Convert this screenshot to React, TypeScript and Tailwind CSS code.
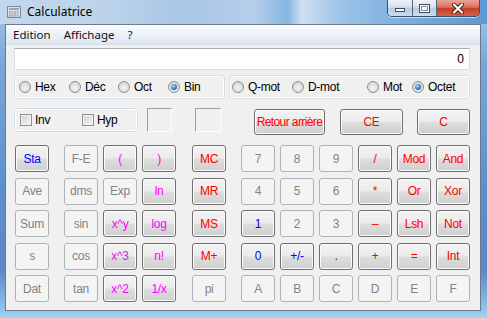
import React from "react";

type Tone = "blue" | "red" | "pink" | "gray";

const toneText: Record<Tone, string> = {
  blue: "text-[#0000ff]",
  red: "text-[#ff0000]",
  pink: "text-[#ff00ff]",
  gray: "text-[#838383]",
};

type KeyDef = { label: string; tone: Tone; off?: boolean };

const on = (label: string, tone: Tone): KeyDef => ({ label, tone });
const off = (label: string): KeyDef => ({ label, tone: "gray", off: true });

const Key: React.FC<{ k: KeyDef; className?: string }> = ({ k, className }) => (
  <div
    className={
      "flex items-center justify-center rounded-[3px] border text-[12px] tracking-[-0.3px] " +
      (k.off
        ? "border-[#adb2b5] bg-[#f4f4f4] "
        : "border-[#707070] bg-[linear-gradient(180deg,#f3f3f3_0%,#ebebeb_48%,#dddddd_52%,#cfcfcf_100%)] shadow-[inset_0_0_0_1px_#fbfbfb] ") +
      toneText[k.tone] +
      " " +
      (className ?? "h-[27px] w-[34px]")
    }
  >
    {k.label}
  </div>
);

const Block: React.FC<{ cols: string; keys: KeyDef[] }> = ({ cols, keys }) => (
  <div className={"grid gap-x-[5px] gap-y-[5.5px] " + cols}>
    {keys.map((k, i) => (
      <Key key={i} k={k} />
    ))}
  </div>
);

const Radio: React.FC<{ label: string; checked?: boolean; className?: string }> = ({
  label,
  checked,
  className,
}) => (
  <div className={"flex items-center gap-[4px] " + (className ?? "")}>
    <span className="flex h-[12px] w-[12px] shrink-0 items-center justify-center rounded-full border border-[#8e8f8f] bg-[radial-gradient(circle_at_50%_60%,#f4f4f4_0%,#dcdcdc_60%,#c8cacd_100%)]">
      {checked && (
        <span className="h-[6px] w-[6px] rounded-full bg-[radial-gradient(circle_at_40%_35%,#a6dcfb_0%,#2f7fc6_55%,#123e74_100%)]" />
      )}
    </span>
    <span className="text-[12px] tracking-[-0.3px] text-black">{label}</span>
  </div>
);

const Check: React.FC<{ label: string; className?: string }> = ({ label, className }) => (
  <div className={"flex items-center gap-[3px] " + (className ?? "")}>
    <span className="h-[12px] w-[12px] shrink-0 border border-[#8e8f8f] bg-[linear-gradient(135deg,#cfd1d4,#f6f6f6)] shadow-[inset_0_0_0_1px_#f4f4f4]" />
    <span className="text-[12px] tracking-[-0.3px] text-black">{label}</span>
  </div>
);

const groupBox =
  "rounded-[3px] border border-[#d5dfe5] shadow-[inset_0_0_0_1px_#ffffff]";

const sunken =
  "h-[24px] border border-t-[#a0a0a0] border-l-[#a0a0a0] border-r-[#fdfdfd] border-b-[#fdfdfd]";

const CalcIcon = () => (
  <svg width="14" height="12" viewBox="0 0 14 12">
    <rect x="0.5" y="0.5" width="13" height="11" fill="#dfe3e8" stroke="#7d8896" />
    <rect x="2" y="2" width="10" height="2" fill="#9aa6b4" />
    {[0, 1, 2, 3].map((c) =>
      [0, 1, 2].map((r) => (
        <rect key={c + "-" + r} x={2 + c * 2.6} y={5.3 + r * 2} width="1.6" height="1.2" fill="#7f8d9d" />
      ))
    )}
  </svg>
);

export default function App() {
  return (
    <div className="flex h-[318px] w-[487px] flex-col overflow-hidden bg-[linear-gradient(180deg,#a9c8e6_0%,#78a7d8_20%,#5c8fcb_60%,#5f86c6_85%,#8cc3ea_97%,#a8d4f2_100%)] font-['Liberation_Sans',Arial,sans-serif]">
      {/* title bar */}
      <div className="flex h-[24px] shrink-0 bg-[linear-gradient(90deg,#c3d7ec_0%,#bcd3ea_22%,#a8c6e6_38%,#b6cfea_52%,#86b6e1_59%,#cfe1f2_62%,#9cc3e8_70%,#79acdc_84%,#5c98d2_100%)]">
        <div className="ml-[7px] flex items-center">
          <CalcIcon />
          <span className="ml-[6px] font-['Noto_Sans',sans-serif] text-[12px] text-black">
            Calculatrice
          </span>
        </div>
        <div className="ml-auto mr-[7px] flex h-[17px] overflow-hidden rounded-b-[5px] border border-t-0 border-[#3f4f66] shadow-[0_1px_0_rgba(255,255,255,0.6)]">
          <div className="flex w-[25px] items-end justify-center border-r border-[#56677d] bg-[linear-gradient(180deg,#eef3f9_0%,#d4e0ee_45%,#b9cbe0_50%,#cfdced_100%)] pb-[4px]">
            <div className="h-[4px] w-[10px] border border-[#3d4b5e] bg-white" />
          </div>
          <div className="flex w-[24px] items-center justify-center border-r border-[#56677d] bg-[linear-gradient(180deg,#eef3f9_0%,#d4e0ee_45%,#b9cbe0_50%,#cfdced_100%)]">
            <div className="flex h-[9px] w-[11px] items-center justify-center border border-[#3d4b5e] bg-white">
              <div className="h-[5px] w-[7px] border border-[#7d8ea4]" />
            </div>
          </div>
          <div className="flex w-[42px] items-center justify-center bg-[linear-gradient(180deg,#eaa596_0%,#d9725f_45%,#c43f28_52%,#d55e45_100%)]">
            <svg width="14" height="11" viewBox="0 0 14 11">
              <path d="M3 1.5 L11 9.5 M11 1.5 L3 9.5" stroke="#4a1a14" strokeWidth="4" strokeLinecap="round" />
              <path d="M3 1.5 L11 9.5 M11 1.5 L3 9.5" stroke="#ffffff" strokeWidth="2.2" strokeLinecap="round" />
            </svg>
          </div>
        </div>
      </div>

      {/* client area */}
      <div className="mb-[7px] ml-[5px] mr-[6px] flex flex-1 flex-col border border-[#6a7b90] bg-[#f0f0f0]">
        {/* menu */}
        <div className="flex h-[20px] shrink-0 items-center gap-[13px] border-b border-[#d5dee9] bg-[linear-gradient(180deg,#fcfdfe_0%,#eaf0f7_55%,#dde6f2_100%)] pl-[7px] font-['Noto_Sans',sans-serif] text-[11.5px] text-[#111]">
          <span>Edition</span>
          <span>Affichage</span>
          <span>?</span>
        </div>

        <div className="flex flex-col pl-[8px] pr-[10px]">
          {/* display */}
          <div className="mt-[3px] flex h-[22px] items-center justify-end border border-[#dbdfe6] border-t-[#abadb3] bg-white pr-[5px] text-[12px] text-black">
            0
          </div>

          {/* radio rows */}
          <div className="mt-[5px] flex h-[24px] gap-[4px]">
            <div className={"flex w-[211px] items-center pl-[4px] " + groupBox}>
              <Radio label="Hex" className="w-[50px]" />
              <Radio label="Déc" className="w-[49px]" />
              <Radio label="Oct" className="w-[50px]" />
              <Radio label="Bin" checked />
            </div>
            <div className={"flex flex-1 items-center pl-[2px] " + groupBox}>
              <Radio label="Q-mot" className="w-[60px]" />
              <Radio label="D-mot" className="w-[75px]" />
              <Radio label="Mot" className="w-[45px]" />
              <Radio label="Octet" checked />
            </div>
          </div>

          {/* inv / hyp row */}
          <div className="mt-[9px] flex h-[27px] items-start">
            <div className={"flex h-[24px] w-[124px] items-center pl-[5px] " + groupBox}>
              <Check label="Inv" className="w-[62px]" />
              <Check label="Hyp" />
            </div>
            <div className={"ml-[9px] w-[25px] " + sunken} />
            <div className={"ml-[23px] w-[26px] " + sunken} />
            <div className="ml-[33px] mt-[1px]">
              <Key k={on("Retour arrière", "red")} className="h-[26px] w-[71px] !tracking-[-0.6px]" />
            </div>
            <div className="ml-[15px] mt-[1px]">
              <Key k={on("CE", "red")} className="h-[26px] w-[63px]" />
            </div>
            <div className="ml-[14px] mt-[1px]">
              <Key k={on("C", "red")} className="h-[26px] w-[53px]" />
            </div>
          </div>

          {/* keypad */}
          <div className="ml-[1px] mt-[10px] flex">
            <Block
              cols="grid-cols-[34px]"
              keys={[on("Sta", "blue"), off("Ave"), off("Sum"), off("s"), off("Dat")]}
            />
            <div className="ml-[15px]">
              <Block
                cols="grid-cols-[34px_34px_34px]"
                keys={[
                  off("F-E"), on("(", "pink"), on(")", "pink"),
                  off("dms"), off("Exp"), on("ln", "pink"),
                  off("sin"), on("x^y", "pink"), on("log", "pink"),
                  off("cos"), on("x^3", "pink"), on("n!", "pink"),
                  off("tan"), on("x^2", "pink"), on("1/x", "pink"),
                ]}
              />
            </div>
            <div className="ml-[16px]">
              <Block
                cols="grid-cols-[34px]"
                keys={[on("MC", "red"), on("MR", "red"), on("MS", "red"), on("M+", "red"), off("pi")]}
              />
            </div>
            <div className="ml-[15px]">
              <Block
                cols="grid-cols-[34px_34px_34px_34px_34px_34px]"
                keys={[
                  off("7"), off("8"), off("9"), on("/", "red"), on("Mod", "red"), on("And", "red"),
                  off("4"), off("5"), off("6"), on("*", "red"), on("Or", "red"), on("Xor", "red"),
                  on("1", "blue"), off("2"), off("3"), on("–", "red"), on("Lsh", "red"), on("Not", "red"),
                  on("0", "blue"), on("+/-", "blue"), on(".", "blue"), on("+", "red"), on("=", "red"), on("Int", "red"),
                  off("A"), off("B"), off("C"), off("D"), off("E"), off("F"),
                ]}
              />
            </div>
          </div>
        </div>
      </div>
    </div>
  );
}
